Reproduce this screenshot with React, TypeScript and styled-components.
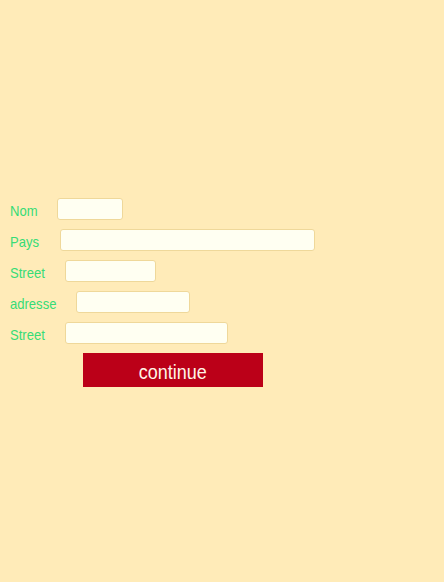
import React from "react";
import styled, { createGlobalStyle } from "styled-components";

const Global = createGlobalStyle`
  html, body {
    margin: 0;
    padding: 0;
    background: #ffebb8;
  }
  body {
    font-family: "Liberation Sans", Arial, sans-serif;
  }
`;

const Page = styled.div`
  width: 444px;
  height: 582px;
  box-sizing: border-box;
  padding: 198px 0 0 10px;
  background: #ffebb8;
`;

const Form = styled.form`
  display: flex;
  flex-direction: column;
  align-items: flex-start;
  gap: 9px;
  margin: 0;
`;

const Row = styled.div`
  display: flex;
  align-items: flex-start;
  height: 22px;
`;

const Label = styled.label<{ $w: number }>`
  flex: 0 0 ${(p) => p.$w}px;
  width: ${(p) => p.$w}px;
  height: 22px;
  overflow: visible;
  white-space: nowrap;
`;

const LabelText = styled.span`
  display: inline-block;
  color: #36dc76;
  font-size: 15px;
  line-height: 26px;
  transform: scaleX(0.87);
  transform-origin: left center;
`;

const Field = styled.input<{ $w: number }>`
  box-sizing: border-box;
  width: ${(p) => p.$w}px;
  height: 22px;
  margin: 0;
  padding: 0 4px;
  background: #fffff2;
  border: 1px solid #efd89a;
  border-radius: 3px;
  outline: none;
  font: inherit;
  font-size: 13px;
`;

const Button = styled.button`
  box-sizing: border-box;
  width: 180px;
  height: 34px;
  margin: 0 0 0 73px;
  padding: 4px 0 0;
  border: none;
  background: #bb0018;
  color: #fff4e6;
  font-family: "Liberation Sans", Arial, sans-serif;
  font-size: 20px;
  line-height: 30px;
  text-align: center;
  cursor: pointer;
`;

const ButtonText = styled.span`
  display: inline-block;
  transform: scaleX(0.9);
`;

const fields: { label: string; labelWidth: number; width: number }[] = [
  { label: "Nom", labelWidth: 47, width: 66 },
  { label: "Pays", labelWidth: 50, width: 255 },
  { label: "Street", labelWidth: 55, width: 91 },
  { label: "adresse", labelWidth: 66, width: 114 },
  { label: "Street", labelWidth: 55, width: 163 },
];

export default function App() {
  return (
    <Page>
      <Global />
      <Form onSubmit={(e) => e.preventDefault()}>
        {fields.map((f, i) => (
          <Row key={i}>
            <Label htmlFor={`f${i}`} $w={f.labelWidth}>
              <LabelText>{f.label}</LabelText>
            </Label>
            <Field id={`f${i}`} type="text" $w={f.width} />
          </Row>
        ))}
        <Button type="submit">
          <ButtonText>continue</ButtonText>
        </Button>
      </Form>
    </Page>
  );
}
